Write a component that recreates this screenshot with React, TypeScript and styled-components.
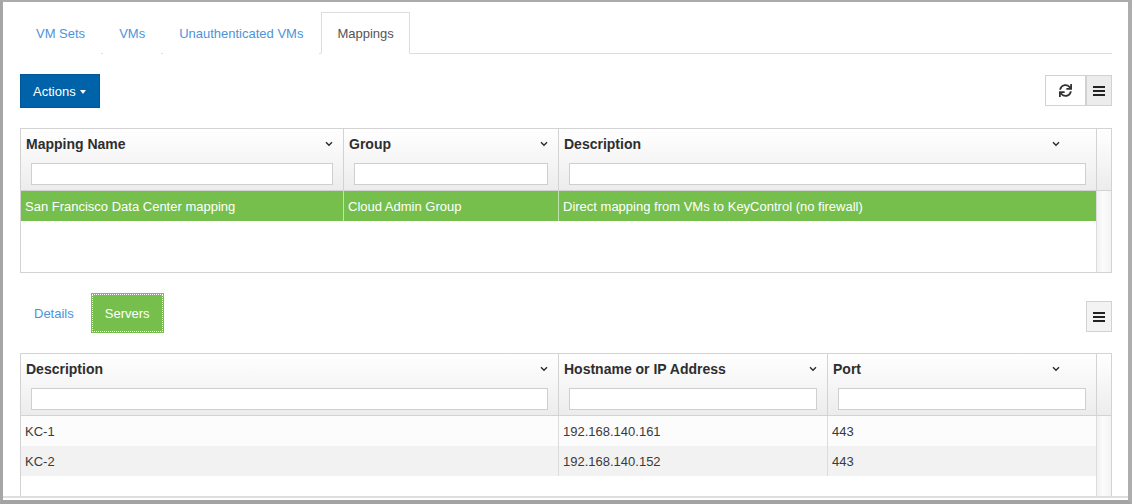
import React from "react";
import styled, { createGlobalStyle } from "styled-components";
import { FaSync } from "react-icons/fa";

const GlobalStyle = createGlobalStyle`
  html, body {
    margin: 0;
    padding: 0;
    background: #fff;
  }
  body {
    font-family: "Liberation Sans", Arial, Helvetica, sans-serif;
    font-size: 13px;
    line-height: 20px;
    color: #333;
  }
  * {
    box-sizing: border-box;
  }
`;

type Column = {
  title: string;
  width: number;
};

type GridProps = {
  columns: Column[];
  bodyHeight: number;
  children: React.ReactNode;
};

const topColumns: Column[] = [
  { title: "Mapping Name", width: 322 },
  { title: "Group", width: 215 },
  { title: "Description", width: 538 },
];

const serverColumns: Column[] = [
  { title: "Description", width: 537 },
  { title: "Hostname or IP Address", width: 269 },
  { title: "Port", width: 269 },
];

const servers = [
  { name: "KC-1", host: "192.168.140.161", port: "443" },
  { name: "KC-2", host: "192.168.140.152", port: "443" },
];

const Chevron = () => (
  <svg width="8" height="6" viewBox="0 0 8 6">
    <polyline
      points="1,1.2 4,4.2 7,1.2"
      fill="none"
      stroke="#2b2b2b"
      strokeWidth="1.4"
    />
  </svg>
);

const BarsIcon = () => (
  <svg width="12" height="10" viewBox="0 0 12 10">
    <rect x="0" y="0" width="12" height="2" fill="#222" />
    <rect x="0" y="4" width="12" height="2" fill="#222" />
    <rect x="0" y="8" width="12" height="2" fill="#222" />
  </svg>
);

const templateOf = (columns: Column[]) =>
  columns.map((c) => `${c.width}px`).join(" ");

const Grid: React.FC<GridProps> = ({ columns, bodyHeight, children }) => {
  return (
    <GridBox>
      <GridHeader $template={templateOf(columns) + " 1fr"}>
        {columns.map((col, i) => (
          <HeaderCell key={col.title} $first={i === 0}>
            <TitleRow $last={i === columns.length - 1}>
              <span>{col.title}</span>
              <Chevron />
            </TitleRow>
            <FilterInput type="text" />
          </HeaderCell>
        ))}
        <HeaderCell $first={false} />
      </GridHeader>
      <GridBody $height={bodyHeight}>
        <Rows>{children}</Rows>
        <ScrollStrip />
      </GridBody>
    </GridBox>
  );
};

const App: React.FC = () => {
  const topTemplate = templateOf(topColumns);
  const serverTemplate = templateOf(serverColumns);

  return (
    <>
      <GlobalStyle />
      <Frame>
        <Viewport>
          <NavTabs>
            <Tab>VM Sets</Tab>
            <Tab>VMs</Tab>
            <Tab>Unauthenticated VMs</Tab>
            <Tab $active>Mappings</Tab>
          </NavTabs>

          <Toolbar>
            <ActionsButton>
              Actions <Caret />
            </ActionsButton>
            <ButtonGroup $top={1}>
              <IconButton $width={41} $bg="#fff">
                <FaSync size={13} color="#333" />
              </IconButton>
              <IconButton $width={26} $bg="#ececec">
                <BarsIcon />
              </IconButton>
            </ButtonGroup>
          </Toolbar>

          <Section>
            <Grid columns={topColumns} bodyHeight={81}>
              <Row $template={topTemplate} $bg="#76bf4c">
                <Cell $first $selected>
                  San Francisco Data Center mapping
                </Cell>
                <Cell $selected>Cloud Admin Group</Cell>
                <Cell $selected>Direct mapping from VMs to KeyControl (no firewall)</Cell>
              </Row>
            </Grid>
          </Section>

          <SubToolbar>
            <Pills>
              <Pill>Details</Pill>
              <Pill $active>Servers</Pill>
            </Pills>
            <ButtonGroup $top={8}>
              <IconButton $width={26} $bg="#f3f3f3">
                <BarsIcon />
              </IconButton>
            </ButtonGroup>
          </SubToolbar>

          <Section>
            <Grid columns={serverColumns} bodyHeight={140}>
              {servers.map((s, i) => (
                <Row
                  key={s.name}
                  $template={serverTemplate}
                  $bg={i % 2 === 0 ? "#fcfcfc" : "#f2f2f2"}
                >
                  <Cell $first>{s.name}</Cell>
                  <Cell>{s.host}</Cell>
                  <Cell>{s.port}</Cell>
                </Row>
              ))}
            </Grid>
          </Section>
        </Viewport>
      </Frame>
    </>
  );
};

export default App;

const Frame = styled.div`
  width: 1132px;
  height: 504px;
  border-top: 2px solid #ababab;
  border-left: 3px solid #a6a6a6;
  border-right: 4px solid #adadad;
  border-bottom: 4px solid #a3a3a3;
  background: #fff;
`;

const Viewport = styled.div`
  height: 496px;
  overflow: hidden;
  padding: 10px 16px 0 17px;
  border-bottom: 2px solid #dedede;
`;

const NavTabs = styled.ul`
  display: flex;
  margin: 0;
  padding: 0;
  list-style: none;
  border-bottom: 1px solid #ddd;
`;

const Tab = styled.li<{ $active?: boolean }>`
  margin: 0 2px -1px 0;
  padding: 11px 15px 9px;
  border: 1px solid ${(p) => (p.$active ? "#ddd" : "transparent")};
  border-bottom-color: ${(p) => (p.$active ? "#fff" : "transparent")};
  background: #fff;
  color: ${(p) => (p.$active ? "#555" : "#4d93da")};
  font-size: 13px;
  line-height: 20px;
`;

const Toolbar = styled.div`
  display: flex;
  justify-content: space-between;
  align-items: flex-start;
  margin-top: 20px;
`;

const ActionsButton = styled.button`
  display: inline-flex;
  align-items: center;
  height: 34px;
  padding: 7px 13px 5px 12px;
  border: 1px solid #00579a;
  background: #0062a9;
  color: #fff;
  font-family: inherit;
  font-size: 13px;
  line-height: 20px;
`;

const Caret = styled.span`
  display: inline-block;
  width: 0;
  height: 0;
  margin-left: 4px;
  border-top: 4px solid #fff;
  border-left: 3px solid transparent;
  border-right: 3px solid transparent;
`;

const ButtonGroup = styled.div<{ $top: number }>`
  display: flex;
  margin-top: ${(p) => p.$top}px;
`;

const IconButton = styled.button<{ $width: number; $bg: string }>`
  display: flex;
  align-items: center;
  justify-content: center;
  width: ${(p) => p.$width}px;
  height: 31px;
  padding: 0;
  border: 1px solid #d2d2d2;
  background: ${(p) => p.$bg};
`;

const Section = styled.div`
  margin-top: 20px;
`;

const GridBox = styled.div`
  border: 1px solid #d3d3d3;
  background: #fff;
`;

const GridHeader = styled.div<{ $template: string }>`
  display: grid;
  grid-template-columns: ${(p) => p.$template};
  border-bottom: 1px solid #d3d3d3;
  background: linear-gradient(to bottom, #ffffff 0%, #f4f4f4 60%, #ececec 100%);
`;

const HeaderCell = styled.div<{ $first: boolean }>`
  height: 61px;
  padding: 5px 10px 5px 5px;
  border-left: ${(p) => (p.$first ? "none" : "1px solid #d3d3d3")};
`;

const TitleRow = styled.div<{ $last: boolean }>`
  display: flex;
  justify-content: space-between;
  align-items: center;
  height: 20px;
  padding-right: ${(p) => (p.$last ? 26 : 0)}px;
  font-weight: bold;
  font-size: 14px;
  color: #2e2e2e;
`;

const FilterInput = styled.input`
  display: block;
  width: calc(100% - 5px);
  height: 22px;
  margin: 9px 0 0 5px;
  border: 1px solid #cfcfcf;
  background: #fff;
  outline: none;
`;

const GridBody = styled.div<{ $height: number }>`
  display: grid;
  grid-template-columns: 1fr 15px;
  height: ${(p) => p.$height}px;
`;

const Rows = styled.div`
  display: flex;
  flex-direction: column;
`;

const ScrollStrip = styled.div`
  border-left: 1px solid #dcdcdc;
  background: linear-gradient(to right, #f2f2f2 0%, #fbfbfb 45%, #f3f3f3 100%);
`;

const Row = styled.div<{ $template: string; $bg: string }>`
  display: grid;
  grid-template-columns: ${(p) => p.$template};
  height: 30px;
  background: ${(p) => p.$bg};
`;

const Cell = styled.div<{ $first?: boolean; $selected?: boolean }>`
  padding: 0 4px;
  line-height: 31px;
  font-size: 13px;
  white-space: nowrap;
  overflow: hidden;
  color: ${(p) => (p.$selected ? "#fff" : "#3a3a3a")};
  border-left: ${(p) =>
    p.$first
      ? "none"
      : p.$selected
      ? "1px solid rgba(255,255,255,0.55)"
      : "1px solid #dcdcdc"};
`;

const SubToolbar = styled.div`
  display: flex;
  justify-content: space-between;
  align-items: flex-start;
  margin-top: 20px;
`;

const Pills = styled.div`
  display: flex;
`;

const Pill = styled.div<{ $active?: boolean }>`
  margin-right: 3px;
  padding: 11px 14px 9px;
  font-size: 13px;
  line-height: 20px;
  background: ${(p) => (p.$active ? "#76bf4c" : "transparent")};
  color: ${(p) => (p.$active ? "#fff" : "#4d93da")};
  outline: ${(p) => (p.$active ? "1px dotted #ffffff" : "none")};
  outline-offset: -2px;
`;
